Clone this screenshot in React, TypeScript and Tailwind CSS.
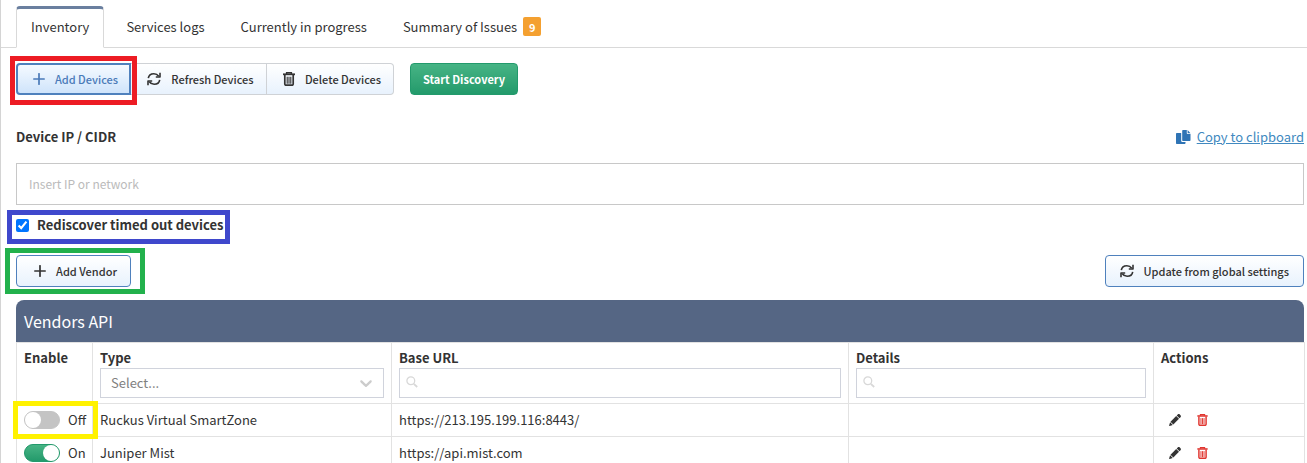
import React from "react";

function PlusIcon() {
  return (
    <svg viewBox="0 0 12 12" className="size-3 shrink-0" fill="none" stroke="currentColor" strokeWidth="1.7" strokeLinecap="round" aria-hidden="true">
      <path d="M6 .8v10.4M.8 6h10.4" />
    </svg>
  );
}

function RefreshIcon() {
  return (
    <svg viewBox="0 0 14 14" className="size-3.5 shrink-0" fill="none" stroke="currentColor" strokeWidth="1.6" aria-hidden="true">
      <path d="M1.3 6.2C1.7 3.4 4 1.7 6.9 1.7c2 0 3.7.9 4.8 2.5M12.7 7.8c-.4 2.8-2.7 4.5-5.6 4.5-2 0-3.7-.9-4.8-2.5" />
      <path d="M13 .8v4.2H8.8M1 13.2V9h4.2" strokeLinejoin="round" />
    </svg>
  );
}

function TrashIcon({ className }: { className: string }) {
  return (
    <svg viewBox="0 0 12 14" className={className} fill="none" stroke="currentColor" aria-hidden="true">
      <path d="M0 2.3h12" strokeWidth="1.8" />
      <path d="M3.6 2V.7h4.8V2" strokeWidth="1.4" />
      <path d="M1.8 3v9.1c0 .7.4 1.1 1.1 1.1h6.2c.7 0 1.1-.4 1.1-1.1V3" strokeWidth="1.7" />
      <path d="M4.2 4.8v7M6 4.8v7M7.8 4.8v7" strokeWidth="1.1" />
    </svg>
  );
}

function PencilIcon() {
  return (
    <svg viewBox="0 0 12 12" className="size-3" fill="currentColor" aria-hidden="true">
      <path d="M8.700.500c.6-.6 1.500-.6 2.100 0l.700.700c.6.6.6 1.500 0 2.100L10.500 4.300 7.700 1.500z" />
      <path d="M7.200 2L10 4.800 4.300 10.500 1.500 7.700z" />
      <path d="M1.100 8.200L3.800 10.900.6 11.900c-.3.1-.6-.2-.5-.5z" />
    </svg>
  );
}

function CopyIcon() {
  return (
    <svg viewBox="0 0 15 15" className="size-[15px] shrink-0 fill-[#2f74b5]" aria-hidden="true">
      <path d="M1 3h4.200v7.700c0 .8.500 1.300 1.300 1.300H9.500v1c0 .6-.4 1-1 1H1c-.6 0-1-.4-1-1V4c0-.6.4-1 1-1z" />
      <path d="M7.200 0h3.600v3c0 .6.400 1 1 1h2.700v6c0 .6-.4 1-1 1H7.200c-.6 0-1-.4-1-1V1c0-.6.4-1 1-1z" />
      <path d="M11.600 0l2.900 3.200h-2.900z" />
    </svg>
  );
}

function SearchIcon() {
  return (
    <svg viewBox="0 0 12 12" className="pointer-events-none absolute top-2 left-[7px] size-3 text-[#d8d8d8]" fill="none" stroke="currentColor" aria-hidden="true">
      <circle cx="4.8" cy="4.8" r="3.9" strokeWidth="1.3" />
      <path d="M7.8 7.8l3.4 3.2" strokeWidth="1.8" />
    </svg>
  );
}

const tabs = ["Inventory", "Services logs", "Currently in progress"];

const vendors = [
  { type: "Ruckus Virtual SmartZone", url: "https://213.195.199.116:8443/", on: false },
  { type: "Juniper Mist", url: "https://api.mist.com", on: true },
];

const th = "border border-[#e2e2e2] px-[7px] pt-[5px] pb-[5px] text-left align-top font-bold";
const td = "h-[33px] border border-[#e2e2e2] px-[7px] py-0";
const btn = "flex h-8 items-center border bg-linear-to-b from-white to-[#e8f2fd] text-[11px] font-medium";

export default function App() {
  return (
    <main className="h-screen overflow-y-auto border-l border-[#d4d4d4] bg-white pr-[3px] font-['Noto_Sans_CJK_SC',sans-serif] text-[13px] leading-5 text-[#333] [scrollbar-width:none]">
      <nav className="-mr-[3px] flex h-12 items-end border-b border-[#d9d9d9] pl-[15px]">
        {tabs.map((tab, i) => (
          <button
            key={tab}
            type="button"
            className={
              i === 0
                ? "mr-1 -mb-px h-[42px] rounded-t border border-t-3 border-[#d9d9d9] border-t-[#6a7f9f] border-b-white bg-white px-3.5 pb-0.5"
                : "h-[41px] px-[18px]"
            }
          >
            {tab}
          </button>
        ))}
        <button type="button" className="flex h-[41px] items-center gap-1.5 px-[18px]">
          Summary of Issues
          <span className="flex h-[19px] w-[18px] items-center justify-center rounded-xs bg-[#f4a030] text-[11px] font-bold text-white">9</span>
        </button>
      </nav>

      <div className="pl-[15px]">
        <div className="mt-[15px] flex">
          <div className="relative">
            <button type="button" className="flex h-8 w-[115px] items-center justify-center gap-2.5 rounded-l border-2 border-[#4f81bd] bg-linear-to-b from-[#f5faff] to-[#cfe4fb] pl-1 text-[11px] font-medium text-[#4a7ab8]">
              <PlusIcon />
              Add Devices
            </button>
            <span className="pointer-events-none absolute -inset-x-1.5 -top-[7px] -bottom-2.5 border-5 border-[#ed1c24]" />
          </div>
          <button type="button" className={`${btn} w-[136px] justify-center gap-2.5 border-l-0 border-[#cfd2d6] pl-1`}>
            <RefreshIcon />
            Refresh Devices
          </button>
          <button type="button" className={`${btn} w-[127px] justify-center gap-2.5 rounded-r border-l-0 border-[#cfd2d6] pl-1`}>
            <TrashIcon className="h-3.5 w-3 shrink-0" />
            Delete Devices
          </button>
          <button type="button" className="ml-4 h-8 w-[108px] rounded border border-[#239a6c] bg-linear-to-b from-[#46b485] to-[#229a6b] text-[11px] font-bold text-white">
            Start Discovery
          </button>
        </div>

        <div className="mt-8 flex items-center justify-between">
          <label htmlFor="ip" className="font-bold">Device IP / CIDR</label>
          <a href="#copy" className="flex items-center gap-1.5 text-[#4189c0]">
            <CopyIcon />
            <span className="underline">Copy to clipboard</span>
          </a>
        </div>
        <input id="ip" placeholder="Insert IP or network" className="mt-4 block h-[42px] w-full border border-[#c8c8c8] px-3 pb-0.5 text-xs outline-none placeholder:text-[#bbb]" />

        <div className="relative mt-2.5 flex w-fit items-center gap-2">
          <input id="rediscover" type="checkbox" defaultChecked className="size-[13px] accent-[#0075ff]" />
          <label htmlFor="rediscover" className="font-bold">Rediscover timed out devices</label>
          <span className="pointer-events-none absolute -top-[5px] -right-1.5 -bottom-[9px] -left-[9px] border-5 border-[#3f48cc]" />
        </div>

        <div className="mt-5 flex justify-between">
          <div className="relative">
            <button type="button" className={`${btn} w-[115px] justify-center gap-2.5 rounded border-[#4f81bd] pl-1`}>
              <PlusIcon />
              Add Vendor
            </button>
            <span className="pointer-events-none absolute -top-[7px] -right-3.5 -bottom-[7px] -left-[11px] border-5 border-[#22b14c]" />
          </div>
          <button type="button" className={`${btn} gap-2.5 rounded border-[#4f81bd] px-3.5`}>
            <RefreshIcon />
            Update from global settings
          </button>
        </div>

        <h2 className="mt-[13px] flex h-[42px] items-center rounded-t-lg bg-[#556684] px-2 text-base text-white">Vendors API</h2>
        <table className="w-full table-fixed border-collapse">
          <colgroup>
            <col className="w-[76px]" />
            <col className="w-[299px]" />
            <col className="w-[457px]" />
            <col className="w-[305px]" />
            <col className="w-[151px]" />
          </colgroup>
          <thead>
            <tr>
              <th className={th}>Enable</th>
              <th className={th}>
                <label htmlFor="type">Type</label>
                <div className="relative">
                  <select id="type" className="block h-[30px] w-full appearance-none border border-[#d0d3dc] bg-white px-2.5 font-normal text-[#808080] outline-none">
                    <option>Select...</option>
                  </select>
                  <svg viewBox="0 0 20 20" className="pointer-events-none absolute top-[5px] right-2 size-5 fill-[#ccc]" aria-hidden="true">
                    <path d="M4.516 7.548c.436-.446 1.043-.481 1.576 0L10 11.295l3.908-3.747c.533-.481 1.141-.446 1.574 0 .436.445.408 1.197 0 1.615-.406.418-4.695 4.502-4.695 4.502-.217.223-.502.335-.787.335s-.57-.112-.789-.335c0 0-4.287-4.084-4.695-4.502s-.436-1.17 0-1.615z" />
                  </svg>
                </div>
              </th>
              <th className={th}>
                <label htmlFor="url">Base URL</label>
                <div className="relative">
                  <input id="url" className="block h-[30px] w-full border border-[#d0d3dc] pr-2 pl-6 font-normal outline-none" />
                  <SearchIcon />
                </div>
              </th>
              <th className={th}>
                <label htmlFor="details">Details</label>
                <div className="relative">
                  <input id="details" className="block h-[30px] w-full border border-[#d0d3dc] pr-2 pl-6 font-normal outline-none" />
                  <SearchIcon />
                </div>
              </th>
              <th className={th}>Actions</th>
            </tr>
          </thead>
          <tbody>
            {vendors.map((v) => (
              <tr key={v.type}>
                <td className={td}>
                  <label className="relative flex items-center gap-2">
                    <input
                      type="checkbox"
                      role="switch"
                      defaultChecked={v.on}
                      className="flex h-[18px] w-9 shrink-0 appearance-none items-center rounded-full border border-[#c4c4c4] bg-[#c4c4c4] before:size-4 before:rounded-full before:bg-white checked:justify-end checked:border-[#239a6c] checked:bg-linear-to-b checked:from-[#46b485] checked:to-[#229a6b]"
                    />
                    {v.on ? "On" : "Off"}
                    {!v.on && <span className="pointer-events-none absolute -top-[9px] -right-[13px] -bottom-[9px] -left-[11px] border-5 border-[#fff200]" />}
                  </label>
                </td>
                <td className={td}>{v.type}</td>
                <td className={td}>{v.url}</td>
                <td className={td}></td>
                <td className={td}>
                  <div className="flex items-center gap-4 pl-2">
                    <button type="button" aria-label="Edit"><PencilIcon /></button>
                    <button type="button" aria-label="Delete"><TrashIcon className="h-3 w-[11px] text-[#e0352f]" /></button>
                  </div>
                </td>
              </tr>
            ))}
          </tbody>
        </table>
      </div>
    </main>
  );
}
